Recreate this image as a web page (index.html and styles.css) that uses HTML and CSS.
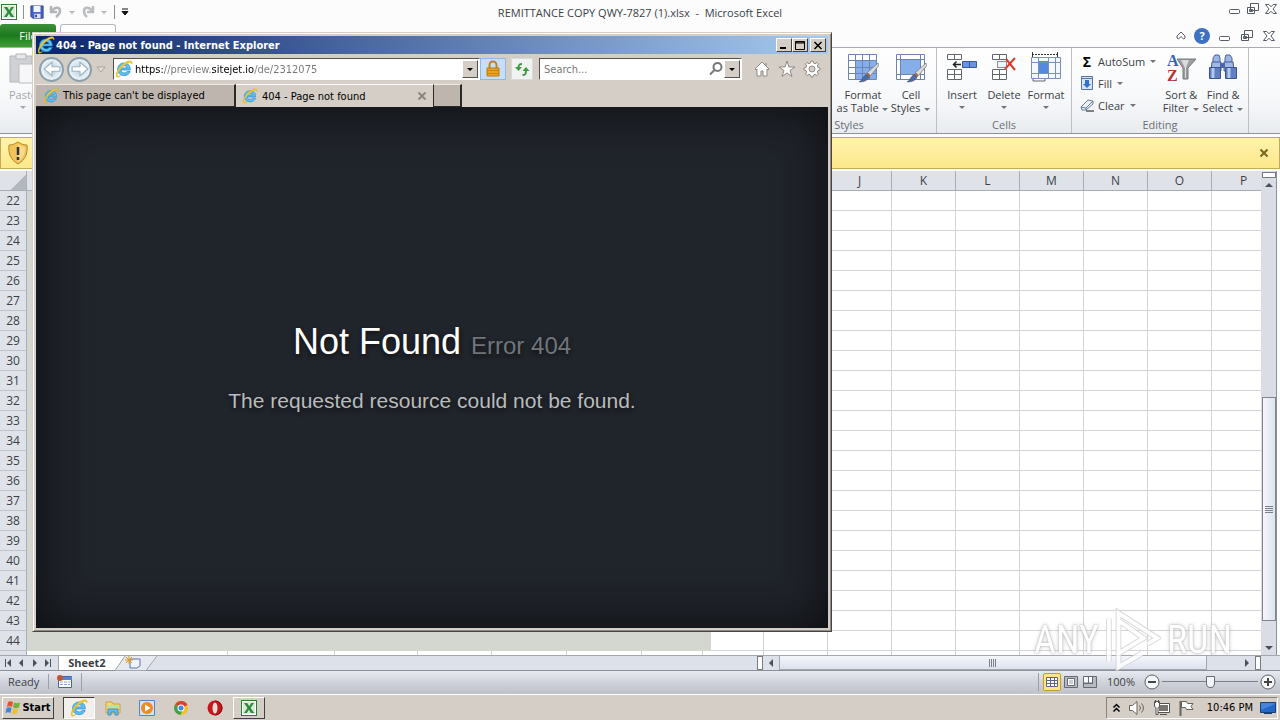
FILE: index.html
```html
<!DOCTYPE html>
<html lang="en">
<head>
    <meta charset="UTF-8">
    <meta name="viewport" content="width=device-width, initial-scale=1.0">
    <title>Desktop</title>
    <link rel="stylesheet" href="styles.css">
</head>
<body>
    <!-- shared icons -->
    <svg class="defs" width="0" height="0">
        <symbol id="ie" viewBox="0 0 16 16">
            <path d="M13.6 8.9H5.2c.1 1.500 1.300 2.600 3 2.600 1.200 0 2-.5 2.500-1.300h2.800c-.8 2.300-2.700 3.700-5.400 3.700C4.600 13.900 2.300 11.600 2.300 8.300 2.300 5 4.700 2.700 8 2.700c3.500 0 5.700 2.300 5.600 6.200zM5.300 7h5.300C10.400 5.700 9.400 5 8 5 6.600 5 5.600 5.700 5.300 7z" fill="#5cc0f2" stroke="#2b86cc" stroke-width=".6"/>
            <path d="M1.500 15C-.5 12.500 4 5.500 9 2.300 12.500 0 16 .2 15 3.600c0-1.900-2-2-5-.1C5.500 6.300 1.800 11.300 1.900 13.700c.1 1 1.500.9 3.100.1C3.700 15 2.300 15.700 1.500 15z" fill="#f3d02c" stroke="#d8ac18" stroke-width=".4"/>
        </symbol>
        <symbol id="excel" viewBox="0 0 16 16">
            <rect x=".5" y=".5" width="15" height="15" fill="#fff" stroke="#2b7a36"/>
            <rect x="2" y="2" width="12" height="12" fill="#d5e9d3"/>
            <path d="M3 3h3.200l2 3.200L10.300 3H13L9.600 8l3.600 5H10L7.900 9.800 5.800 13H3l3.500-5z" fill="#2e8b3d"/>
        </symbol>
        <symbol id="min" viewBox="0 0 14 12"><rect x="1.500" y="6.500" width="10" height="4" rx="1" fill="#fff" stroke="#555b63"/></symbol>
        <symbol id="restore" viewBox="0 0 14 12">
            <path d="M4.500.5h8v7h-8z M1.500 4.500h7v6h-7z" fill="#fff" stroke="#555b63"/><path d="M3.500 6.500h3v2h-3z" fill="none" stroke="#555b63"/>
        </symbol>
        <symbol id="close" viewBox="0 0 14 12"><path d="M1.500 1.500h3.300L7 3.800l2.200-2.300h3.300L9 6l3.500 4.500H9.200L7 8.200l-2.200 2.300H1.500L5 6z" fill="#fff" stroke="#555b63"/></symbol>
        <symbol id="brush" viewBox="0 0 20 20">
            <path d="M19 1l1 2-8 10-3-3z" fill="#d8dade" stroke="#70757c" stroke-width=".7"/>
            <path d="M9 10l3 3-2 2-3-2z" fill="#b06a38"/>
            <path d="M7.500 12l3 2.500C9 18 5 19 1 19c3-1 3-5 6.500-7z" fill="#4d6da8" stroke="#384a70" stroke-width=".5"/>
        </symbol>
        <symbol id="down" viewBox="0 0 8 5"><path d="M1 1h6L4 4z" fill="currentColor"/></symbol>
    </svg>

    <main class="excel">
        <header class="excel-title">
            <div class="quick">
                <svg width="16" height="16"><use href="#excel"/></svg>
                <span class="sep"></span>
                <svg width="14" height="14" viewBox="0 0 16 16"><path d="M1 1h14v14H3l-2-2z" fill="#4a62c4" stroke="#2d3d92"/><path d="M4 1h8v7H4z" fill="#f2f5fb"/><path d="M5 10h7v5H5z" fill="#dfe3ee"/><path d="M6 11h2v3H6z" fill="#2d3d92"/></svg>
                <svg class="undo" width="16" height="16" viewBox="0 0 16 16"><path d="M3 2v6h6M3.500 7.500C7 2 12 3 12 7c0 3-2 4.500-4 6" fill="none" stroke="#b2b5b9" stroke-width="2.500"/></svg>
                <svg class="faint" width="8" height="5"><use href="#down"/></svg>
                <svg class="redo" width="16" height="16" viewBox="0 0 16 16"><path d="M13 2v6H7M12.500 7.500C9 2 4 3 4 7c0 3 1 4.500 3 6" fill="none" stroke="#b9bcc0" stroke-width="2.500"/></svg>
                <svg class="faint" width="8" height="5"><use href="#down"/></svg>
                <span class="sep"></span>
                <svg width="8" height="8" viewBox="0 0 8 8"><path d="M1 1h6M1 3.500h6L4 7z" fill="#111" stroke="#111"/></svg>
            </div>
            <h1>REMITTANCE COPY QWY-7827 (1).xlsx&nbsp; -&nbsp; Microsoft Excel</h1>
            <div class="wincontrols">
                <button aria-label="Minimize"><svg width="14" height="12"><use href="#min"/></svg></button>
                <button aria-label="Restore"><svg width="14" height="12"><use href="#restore"/></svg></button>
                <button aria-label="Close"><svg width="14" height="12"><use href="#close"/></svg></button>
            </div>
        </header>

        <div class="tabs-row">
            <button class="file-tab">File</button>
            <button class="home-tab" aria-label="Home"></button>
            <div class="doc-controls">
                <button aria-label="Collapse ribbon"><svg width="10" height="9" viewBox="0 0 10 9"><path d="M1 7V5l4-4 4 4v2L7.500 8 5 5.500 2.500 8z" fill="#fff" stroke="#555b63"/></svg></button>
                <button class="help" aria-label="Help">?</button>
                <button aria-label="Minimize workbook"><svg width="14" height="12"><use href="#min"/></svg></button>
                <button aria-label="Restore workbook"><svg width="14" height="12"><use href="#restore"/></svg></button>
                <button aria-label="Close workbook"><svg width="14" height="12"><use href="#close"/></svg></button>
            </div>
        </div>

        <div class="ribbon">
            <div class="big-buttons clipboard">
                <button class="big disabled">
                    <svg width="32" height="32" viewBox="0 0 32 32"><path d="M3 4h22v26H3z" fill="#d0d1d4" stroke="#b4b5b8"/><path d="M9 2h10v5H9z" fill="#e8e8ea" stroke="#b4b5b8"/><path d="M12 12h18v19H12z" fill="#f7f7f9" stroke="#bbbcc0"/></svg>
                    <span>Paste</span><svg width="8" height="5"><use href="#down"/></svg>
                </button>
            </div>
            <div class="fill"></div>
            <section class="group styles">
                <div class="big-buttons">
                    <button class="big wide">
                        <svg width="32" height="32" viewBox="0 0 32 32"><path d="M1.500 2.500h28v25h-28z" fill="#fff"/><path d="M8 8h22v19H8z" fill="#86aeea"/><path d="M1.500 2.500h28v25h-28zM1 8.500h29M1 15.500h29M1 21.500h29M8.500 2v26M15.500 2v26M22.500 2v26" fill="none" stroke="#6c83b3"/><use href="#brush" x="11" y="10" width="21" height="21"/></svg>
                        <span>Format</span><span>as Table <svg width="8" height="5"><use href="#down"/></svg></span>
                    </button>
                    <button class="big mid">
                        <svg width="32" height="32" viewBox="0 0 32 32"><path d="M1.500 2.500h28v25h-28z" fill="#fff"/><path d="M6 8h19v14H6z" fill="#86aeea"/><path d="M1.500 2.500h28v25h-28zM1 7.500h29M1 22.500h29M5.500 2v26M25.500 2v26" fill="none" stroke="#6c83b3"/><use href="#brush" x="11" y="10" width="21" height="21"/></svg>
                        <span>Cell</span><span>Styles <svg width="8" height="5"><use href="#down"/></svg></span>
                    </button>
                </div>
                <h2>Styles</h2>
            </section>
            <section class="group cells">
                <div class="big-buttons">
                    <button class="big">
                        <svg width="32" height="32" viewBox="0 0 32 32"><path d="M1.500 2.500h14v5h-14zM8.500 2v5M1.500 17.500h14v10h-14zM8.500 17v10M1 22.500h15" fill="#fff" stroke="#62666d"/><path d="M16.500 9.500h14v6h-14z" fill="#6795e0" stroke="#345c9e"/><path d="M23.500 10v5" stroke="#345c9e"/><path d="M15 12.500H8M10.500 9.500l-3 3 3 3" fill="none" stroke="#222" stroke-width="1.500"/></svg>
                        <span>Insert</span><svg width="8" height="5"><use href="#down"/></svg>
                    </button>
                    <button class="big">
                        <svg width="32" height="32" viewBox="0 0 32 32"><path d="M4.500 2.500h14v5h-14zM11.500 2v5M4.500 17.500h14v10h-14zM11.500 17v10M4 22.500h15" fill="#fff" stroke="#62666d"/><path d="M9.500 9.500h9v6h-9z" fill="#eef4ff" stroke="#222" stroke-dasharray="1 1"/><path d="M18 7l9 11M27 6L17 17" stroke="#df3b2c" stroke-width="2"/></svg>
                        <span>Delete</span><svg width="8" height="5"><use href="#down"/></svg>
                    </button>
                    <button class="big">
                        <svg width="32" height="32" viewBox="0 0 32 32"><path d="M1.500 5.500h29v20h-29z" fill="#f5f8ff"/><path d="M9 9h9v13H9z" fill="#5589df"/><path d="M1.500 5.500h29v21h-29zM1 10.500h29M1 21.500h29M8.500 6v20M18.500 6v20M25.500 6v20" fill="none" stroke="#7b8fc0"/><path d="M2 2.500h26M2.500 0v5M27.500 0v5" stroke="#333" stroke-dasharray="2 1"/><path d="M3 27v2h12v-2" fill="none" stroke="#62666d"/></svg>
                        <span>Format</span><svg width="8" height="5"><use href="#down"/></svg>
                    </button>
                </div>
                <h2>Cells</h2>
            </section>
            <section class="group editing">
                <div class="editing-row">
                    <div class="small-buttons">
                        <button><b class="sigma">Σ</b>AutoSum <svg width="8" height="5"><use href="#down"/></svg></button>
                        <button><svg width="14" height="16" viewBox="0 0 14 16"><path d="M1.500 1.500h11v13h-11z" fill="#d7e5fa" stroke="#5773a8"/><path d="M1 3.500h12" stroke="#5773a8"/><path d="M5 5h4v4h2l-4 4-4-4h2z" fill="#2f6fd6"/></svg>Fill <svg width="8" height="5"><use href="#down"/></svg></button>
                        <button><svg width="14" height="14" viewBox="0 0 14 14"><path d="M1 9l7-7 5 1v3l-7 6H2z" fill="#e9f2fb" stroke="#6d7c95"/><path d="M1 9l5 1 7-7M6 10v2" fill="none" stroke="#6d7c95"/><path d="M6 13h8" stroke="#111"/></svg>Clear <svg width="8" height="5"><use href="#down"/></svg></button>
                    </div>
                    <div class="big-buttons">
                        <button class="big">
                            <svg width="32" height="32" viewBox="0 0 32 32"><path d="M12 7h19l-8 9v11h-5V16z" fill="#9b9da0" stroke="#77797d"/><path d="M16 8h8l-3 8v10h-1V16z" fill="#d9dadc"/><text x="2" y="14" class="az a">A</text><text x="2" y="29" class="az z">Z</text></svg>
                            <span>Sort &amp;</span><span>Filter <svg width="8" height="5"><use href="#down"/></svg></span>
                        </button>
                        <button class="big">
                            <svg width="32" height="32" viewBox="0 0 32 32"><path d="M8 3h4l1 3v6H6V6zM19 3h4l2 3v6h-7V6z" fill="#9db3e2" stroke="#4a64a0"/><path d="M5 10h9v9H4zM17 10h9l1 9h-10z" fill="#a3b8e6" stroke="#3f5a98"/><path d="M13 11h5v5h-5z" fill="#4d69aa"/><path d="M2.500 15.500h11v11h-11zM18.500 15.500h11v11h-11z" fill="#5f7fc2" stroke="#3a5592"/><path d="M6 16v10M22 16v10" stroke="#b5c7ee" stroke-width="3"/></svg>
                            <span>Find &amp;</span><span>Select <svg width="8" height="5"><use href="#down"/></svg></span>
                        </button>
                    </div>
                </div>
                <h2>Editing</h2>
            </section>
        </div>

        <div class="message-bar">
            <svg width="22" height="24" viewBox="0 0 22 24"><path d="M11 1c3 2 6 3 9 3 1 9-2 15-9 19C4 19 1 13 2 4c3 0 6-1 9-3z" fill="#f3c35a" stroke="#b38a2c"/><path d="M11 3c2 2 5 3 7 3 0 7-2 11-7 15z" fill="#f9d98a"/><path d="M11 6v8M11 16v3" stroke="#333" stroke-width="2.500"/></svg>
            <button aria-label="Close message bar"><svg width="10" height="10" viewBox="0 0 10 10"><path d="M1.500 1.500l7 7M8.500 1.500l-7 7" stroke="#7d6420" stroke-width="2"/></svg></button>
        </div>

        <div class="sheet">
            <div class="grid">
                <table>
                    <colgroup id="cols"></colgroup>
                    <thead><tr id="letters"></tr></thead>
                    <tbody id="rows"></tbody>
                </table>
                <div class="sheet-picture"></div>
            </div>
            <div class="vscroll">
                <span class="split"></span>
                <svg width="14" height="14" viewBox="0 0 14 14"><path d="M3 9h8L7 5z" fill="#4b4f56"/></svg>
                <div class="vtrack"><div class="vthumb"><i></i><i></i><i></i><i></i></div></div>
                <svg width="14" height="14" viewBox="0 0 14 14"><path d="M3 5h8L7 9z" fill="#4b4f56"/></svg>
            </div>
        </div>

        <div class="sheet-tabs">
            <div class="tab-side">
                <div class="tab-nav">
                    <svg width="8" height="8" viewBox="0 0 8 8"><path d="M1 0h1v8H1zM7 0v8L3 4z"/></svg>
                    <svg width="8" height="8" viewBox="0 0 8 8"><path d="M6 0v8L2 4z"/></svg>
                    <svg width="8" height="8" viewBox="0 0 8 8"><path d="M2 0v8l4-4z"/></svg>
                    <svg width="8" height="8" viewBox="0 0 8 8"><path d="M6 0h1v8H6zM1 0v8l4-4z"/></svg>
                </div>
                <button class="sheet-tab">Sheet2</button>
                <svg width="46" height="15" viewBox="0 0 46 15"><path d="M0 0h10L0 14z" fill="#fff"/><path d="M10 0L0 14.500h31L42 0" fill="#e6eaf0" stroke="#a3a8b0"/><path d="M15 3h10v7l-3 2h-7z" fill="#eef3fc" stroke="#5c76ab"/><path d="M14 0v8M10 4h8M11 1l6 6M17 1l-6 6" stroke="#d99a28"/></svg>
            </div>
            <div class="hscroll">
                <span class="vsplit"></span>
                <svg width="14" height="14" viewBox="0 0 14 14"><path d="M9 3v8L5 7z" fill="#4b4f56"/></svg>
                <div class="htrack"><div class="hthumb"><i></i><i></i><i></i><i></i></div></div>
                <svg width="14" height="14" viewBox="0 0 14 14"><path d="M5 3v8l4-4z" fill="#4b4f56"/></svg>
                <span class="vsplit"></span>
            </div>
        </div>

        <footer class="status">
            <span class="ready">Ready</span>
            <svg width="16" height="14" viewBox="0 0 16 14"><path d="M1.500 1.500h13v11h-13z" fill="#fff" stroke="#4463ae"/><path d="M1 2h14v3H1z" fill="#5b80cf"/><path d="M3 7h10M3 9.500h10" stroke="#8ba3dc" stroke-dasharray="3 1"/><circle cx="3" cy="3" r="3" fill="#c25536"/></svg>
            <span class="bar"></span>
            <div class="view">
                <span class="bar"></span>
                <button class="active" aria-label="Normal"><svg width="14" height="12" viewBox="0 0 14 12"><path d="M1.500 1.500h11v9h-11zM1 4.500h12M1 7.500h12M5.500 1v10M9.500 1v10" fill="#fff" stroke="#5b6585"/></svg></button>
                <button aria-label="Page layout"><svg width="14" height="12" viewBox="0 0 14 12"><path d="M.5.500h13v11H.5z" fill="#b7bac0" stroke="#666a72"/><path d="M3.500 2.500h7v7h-7z" fill="#fff" stroke="#666a72"/><path d="M5 5h4M5 7h4" stroke="#9a9ea5"/></svg></button>
                <button aria-label="Page break preview"><svg width="14" height="12" viewBox="0 0 14 12"><path d="M.5.500h13v11H.5z" fill="#b7bac0" stroke="#666a72"/><path d="M1 1h4v5H1zM6 1h3v5H6z" fill="#fff"/><path d="M5.500 1v6M9.500 1v6M1 7.500h9" stroke="#666a72"/></svg></button>
                <label for="zoom">100%</label>
                <button class="round" aria-label="Zoom out"><svg width="16" height="16" viewBox="0 0 16 16"><circle cx="8" cy="8" r="7" fill="#f5f6f8" stroke="#5d6168"/><path d="M4 8h8" stroke="#444" stroke-width="2"/></svg></button>
                <input id="zoom" type="range" min="0" max="100" value="50">
                <button class="round" aria-label="Zoom in"><svg width="16" height="16" viewBox="0 0 16 16"><circle cx="8" cy="8" r="7" fill="#f5f6f8" stroke="#5d6168"/><path d="M4 8h8M8 4v8" stroke="#444" stroke-width="2"/></svg></button>
            </div>
        </footer>
    </main>

    <section class="ie">
        <header class="ie-title">
            <svg width="18" height="18"><use href="#ie"/></svg>
            <h2>404 - Page not found - Internet Explorer</h2>
            <button aria-label="Minimize"><svg width="10" height="9" viewBox="0 0 10 9"><path d="M1 6h6v2H1z"/></svg></button>
            <button aria-label="Maximize"><svg width="10" height="9" viewBox="0 0 10 9"><path d="M.5.500h9v8h-9zM1 1h8v1H1z" fill="none" stroke="#000"/></svg></button>
            <button class="x" aria-label="Close"><svg width="10" height="9" viewBox="0 0 10 9"><path d="M1.500 1l7 7M8.500 1l-7 7" stroke="#000" stroke-width="1.500"/></svg></button>
        </header>
        <div class="ie-nav">
            <button class="travel" aria-label="Back"><svg width="18" height="18" viewBox="0 0 16 16"><path d="M1 8l7-6v4h7v4H8v4z" fill="#fff" stroke="#9db4c2"/></svg></button>
            <button class="travel" aria-label="Forward"><svg width="18" height="18" viewBox="0 0 16 16"><path d="M15 8L8 2v4H1v4h7v4z" fill="#fff" stroke="#9db4c2"/></svg></button>
            <svg class="recent" width="10" height="7" viewBox="0 0 10 7"><path d="M1 1h8L5 6z" fill="#e4e0da" stroke="#aaa39b"/></svg>
            <div class="field address">
                <svg width="18" height="18"><use href="#ie"/></svg>
                <input type="text" aria-label="Address" value="https://preview.sitejet.io/de/2312075">
                <button class="drop" aria-label="Show address list"><svg width="8" height="5"><use href="#down"/></svg></button>
            </div>
            <button class="lock" aria-label="Security report"><svg width="14" height="18" viewBox="0 0 14 18"><path d="M3.500 8V5a3.500 3.500 0 017 0v3" fill="none" stroke="#b8862a" stroke-width="2"/><path d="M1 8h12v8H1z" fill="#eda31d" stroke="#b57817"/><path d="M1 10.500h12M1 13.500h12" stroke="#c98417"/></svg></button>
            <button class="refresh" aria-label="Refresh"><svg width="16" height="16" viewBox="0 0 16 16"><path d="M8 3C5 3 4.500 4 4.500 7" fill="none" stroke="#3d9b3d" stroke-width="2"/><path d="M1 6h7l-3.500 4z" fill="#3d9b3d"/><path d="M8.500 14c3 0 3.500-1 3.500-4" fill="none" stroke="#3d9b3d" stroke-width="2"/><path d="M8.500 10h7L12 6z" fill="#3d9b3d"/></svg></button>
            <div class="field search">
                <input type="text" aria-label="Search" placeholder="Search...">
                <svg width="16" height="16" viewBox="0 0 16 16"><circle cx="9.500" cy="6" r="4" fill="none" stroke="#777" stroke-width="2"/><path d="M6.500 9L2 13.500" stroke="#777" stroke-width="2"/></svg>
                <button class="drop" aria-label="Search providers"><svg width="8" height="5"><use href="#down"/></svg></button>
            </div>
            <div class="ie-tools">
                <button aria-label="Home"><svg width="18" height="18" viewBox="0 0 18 18"><path d="M9 2l7 7-1 1-1-1v7h-4v-5H8v5H4V9l-1 1-1-1zM13 3v3" fill="#fff" stroke="#8f8983"/></svg></button>
                <button aria-label="Favorites"><svg width="18" height="18" viewBox="0 0 18 18"><path d="M9 1l2 6h6l-5 3.500 2 6-5-3.500-5 3.500 2-6L1 7h6z" fill="#fff" stroke="#8f8983"/></svg></button>
                <button aria-label="Tools"><svg width="18" height="18" viewBox="0 0 18 18"><path d="M8 1h2l.5 2 1.500.7L14 2.500 15.500 4l-1.200 2 .7 1.500 2 .5v2l-2 .5-.7 1.500 1.200 2-1.500 1.500-2-1.200-1.500.7-.5 2H8l-.5-2L6 14.300l-2 1.200L2.500 14l1.200-2L3 10.500 1 10V8l2-.5L3.700 6 2.500 4 4 2.500l2 1.200L7.500 3z" fill="#fff" stroke="#8f8983"/><circle cx="9" cy="9" r="3" fill="#d5cec6" stroke="#8f8983"/></svg></button>
            </div>
        </div>
        <nav class="ie-tabs">
            <button class="tab back"><svg width="16" height="16"><use href="#ie"/></svg>This page can't be displayed</button>
            <button class="tab front"><svg width="16" height="16"><use href="#ie"/></svg><span>404 - Page not found</span><svg width="10" height="10" viewBox="0 0 10 10"><path d="M1.500 1.500l7 7M8.500 1.500l-7 7" stroke="#8b8681" stroke-width="2"/></svg></button>
            <button class="new-tab" aria-label="New tab"></button>
        </nav>
        <article class="page">
            <h1>Not Found <small>Error 404</small></h1>
            <p>The requested resource could not be found.</p>
        </article>
    </section>

    <div class="watermark">
        <span>ANY</span>
        <svg width="56" height="64" viewBox="0 0 58 64"><path d="M4 10v44M14 28V4l40 26-10 6M14 36v24l24-14M14 12l26 18-26 16z" fill="none" stroke="#d0d0d0" stroke-width="6"/><path d="M4 10v44M14 28V4l40 26-10 6M14 36v24l24-14M14 12l26 18-26 16z" fill="none" stroke="#fff" stroke-width="4"/></svg>
        <span>RUN</span>
    </div>

    <footer class="taskbar">
        <button class="start"><svg width="16" height="16" viewBox="0 0 16 16"><path d="M3 2c2-1 3-1 5 0L7 7C5 6 4 6 2 7z" fill="#e5532d"/><path d="M9 2.500c2 1 3 1 6 0l-1 5c-3 1-4 1-6 0z" fill="#74b33a"/><path d="M1.500 8c2-1 3-1 5 0l-1 5c-2-1-3-1-5 0z" fill="#3f86d8"/><path d="M8 8.500c2 1 3 1 5 0l-1 5c-2 1-3 1-5 0z" fill="#f3bd2c"/></svg>Start</button>
        <button class="task active" aria-label="Internet Explorer"><svg width="18" height="18"><use href="#ie"/></svg></button>
        <button class="task" aria-label="Explorer"><svg width="18" height="16" viewBox="0 0 18 16"><path d="M2 2h6l1 2h7v9H2z" fill="#f5d76e" stroke="#c9a53c"/><path d="M3 5h12v3H3z" fill="#b9e2a0"/><path d="M4 15V9h10v6h-3v-3H7v3z" fill="#6dbbe6" stroke="#3c8fc0"/></svg></button>
        <button class="task" aria-label="Media Player"><svg width="16" height="16" viewBox="0 0 16 16"><path d="M.5.500h15v15H.5z" fill="#cfe3f6" stroke="#4e8ac7"/><circle cx="8" cy="8" r="6" fill="#f18a1d"/><path d="M6 4.500L11.500 8 6 11.500z" fill="#fff"/></svg></button>
        <button class="task" aria-label="Chrome"><svg width="16" height="16" viewBox="0 0 16 16"><circle cx="8" cy="8" r="7" fill="#f4c21f"/><path d="M8 8L2 4.500A7 7 0 0114.500 5z" fill="#dd4132"/><path d="M8 8L2 4.500A7 7 0 007.500 15L10 9z" fill="#3ea251"/><circle cx="8" cy="8" r="3.500" fill="#fff"/><circle cx="8" cy="8" r="2.500" fill="#4285f4"/></svg></button>
        <button class="task" aria-label="Opera"><svg width="16" height="16" viewBox="0 0 16 16"><ellipse cx="8" cy="8" rx="7.500" ry="7.500" fill="#c4161c"/><ellipse cx="8" cy="8" rx="2.500" ry="5.500" fill="#e6ddd6"/><path d="M8 1a7 7 0 010 14" fill="none" stroke="#86090d"/></svg></button>
        <button class="task raised" aria-label="Excel"><svg width="16" height="16"><use href="#excel"/></svg></button>
        <div class="tray">
            <svg width="9" height="10" viewBox="0 0 9 10"><path d="M1.500 4.500l3-3 3 3M1.500 8.500l3-3 3 3" fill="none" stroke="#000" stroke-width="1.500"/></svg>
            <svg width="18" height="16" viewBox="0 0 18 16"><path d="M1.500 5.500h3L9 1.500v13l-4.500-4h-3z" fill="#fff" stroke="#66625d"/><path d="M11.500 5.500q2 2.500 0 5M13.500 3.500q4 4.500 0 9" fill="none" stroke="#66625d"/></svg>
            <svg width="18" height="16" viewBox="0 0 18 16"><path d="M4.500 3.500h12v9h-12zM7 14.500h7" fill="#fff" stroke="#55514d"/><path d="M6 5h9v6H6z" fill="#77736e"/><path d="M1.500 1.500h5v5l-1.500 1v7H3v-7l-1.500-1zM2.500 0v3M5.500 0v3" fill="#fff" stroke="#55514d"/></svg>
            <svg width="16" height="16" viewBox="0 0 16 16"><path d="M2.500 1v15" stroke="#66625d" stroke-width="2"/><path d="M3.500 1.500h5l1 2h5.500l-2 3 2 3H8.500l-1-2h-4z" fill="#fff" stroke="#66625d"/></svg>
            <time>10:46 PM</time>
            <svg width="16" height="14" viewBox="0 0 16 14"><path d="M.5 1.500h15v10H.5z" fill="#2368c6" stroke="#173f78"/><path d="M1 9L15 3v-1H1z" fill="#4584d8"/><path d="M4 12.500h8" stroke="#173f78"/></svg>
        </div>
    </footer>

    <script>
        // column widths A..I, the rest use the default 64
        const widths = [201, 107, 83, 74, 75, 75, 61, 61, 64];
        const letters = 'ABCDEFGHIJKLMNOPQRSTUVWXYZ';
        const grid = document.querySelector('.grid');
        const gridWidth = grid.clientWidth;
        const gridHeight = grid.clientHeight;
        let cols = '<col style="width:27px">';
        let head = '<th class="corner"></th>';
        let total = 27;
        let count = 0;

        // add columns until the visible area is filled
        while (count < letters.length && total < gridWidth) {
            const w = widths[count] || 64;
            total += w;
            cols += `<col style="width:${w}px">`;
            head += `<th>${letters[count]}</th>`;
            count++;
        }
        document.getElementById('cols').innerHTML = cols;
        document.getElementById('letters').innerHTML = head;
        document.querySelector('.grid table').style.width = total + 'px';

        // a row that does not fit whole gets no number
        let rows = '';
        for (let r = 22, y = 20; y < gridHeight; r++, y += 20) {
            const number = y + 20 <= gridHeight ? r : '';
            rows += `<tr><th>${number}</th>${'<td></td>'.repeat(count)}</tr>`;
        }
        document.getElementById('rows').innerHTML = rows;
    </script>
</body>
</html>
```
FILE: styles.css
```css
* {
    box-sizing: border-box;
}
body {
    display: flex;
    flex-direction: column;
    position: relative;
    height: 100vh;
    margin: 0;
    overflow: hidden;
    font-family: "Open Sans", "Noto Sans", sans-serif;
    font-size: 11px;
    color: #3b3f45;
}
h1, h2, p {
    margin: 0;
    font-weight: normal;
}
button {
    display: flex;
    align-items: center;
    justify-content: center;
    padding: 0;
    border: 0;
    background: none;
    font: inherit;
    color: inherit;
}
svg {
    flex: none;
}
.defs {
    position: absolute;
}

/* Excel */
.excel {
    flex: 1;
    min-height: 0;
    display: flex;
    flex-direction: column;
    background: #fcfcfd;
}
.excel-title {
    display: grid;
    grid-template-columns: 1fr auto 1fr;
    align-items: center;
    height: 24px;
}
.excel-title h1 {
    font-size: 11px;
}
.quick {
    display: flex;
    align-items: center;
    gap: 4px;
    padding-left: 1px;
}
.quick .sep {
    width: 1px;
    height: 14px;
    margin: 0 2px;
    background: #8d9197;
}
.faint {
    color: #b2b5b9;
}
.wincontrols {
    display: flex;
    justify-content: flex-end;
    gap: 4px;
    padding: 0 2px 6px 0;
}
.tabs-row {
    display: flex;
    height: 24px;
    border-bottom: 1px solid #a9adb3;
}
.file-tab {
    width: 56px;
    border-radius: 3px 3px 0 0;
    background: linear-gradient(#3b8f38, #1d7a1d 50%, #3f9f35);
    color: #fff;
}
.home-tab {
    width: 56px;
    margin-left: 4px;
    border: 1px solid #b5b8bd;
    border-bottom: 0;
    border-radius: 3px 3px 0 0;
    background: #fff;
}
.doc-controls {
    display: flex;
    align-items: center;
    gap: 8px;
    margin-left: auto;
    padding-right: 4px;
}
.help {
    width: 16px;
    height: 16px;
    border-radius: 50%;
    background: #3c72c0;
    color: #fff;
    font-weight: bold;
}
.ribbon {
    display: flex;
    height: 86px;
    padding-right: 31px;
    border-bottom: 1px solid #8d9299;
    background: linear-gradient(#fff, #f7f8fa 60%, #e8ebef);
}
.ribbon svg {
    color: #70757c;
}
.fill {
    flex: 1;
}
.group {
    display: flex;
    flex-direction: column;
    justify-content: space-between;
    border-right: 1px solid #bcc0c6;
}
.group h2 {
    padding-bottom: 1px;
    font-size: 11px;
    line-height: 14px;
    text-align: center;
    color: #6b7078;
}
.styles {
    width: 175px;
}
.styles .big-buttons {
    justify-content: flex-end;
}
.cells {
    width: 135px;
}
.editing {
    width: 177px;
}
.big-buttons {
    display: flex;
    justify-content: center;
    padding: 4px 3px 0;
}
.clipboard {
    padding-left: 2px;
}
.big {
    flex-direction: column;
    justify-content: flex-start;
    width: 42px;
    line-height: 13px;
    white-space: nowrap;
}
.big > svg + span {
    padding-top: 4px;
}
.big > svg:last-child {
    margin-top: 4px;
}
.wide {
    width: 52px;
}
.mid {
    width: 44px;
}
.ribbon .disabled, .ribbon .disabled svg {
    color: #a4a6aa;
}
.az {
    font: bold 16px "Liberation Serif", serif;
}
.a {
    fill: #2f62b8;
}
.z {
    fill: #b03434;
}
.editing-row {
    display: flex;
    justify-content: space-between;
}
.editing-row .big-buttons {
    padding-right: 4px;
}
.small-buttons {
    display: flex;
    flex-direction: column;
    padding: 2px 0 0 8px;
}
.small-buttons button {
    justify-content: flex-start;
    gap: 4px;
    height: 22px;
}
.sigma {
    width: 14px;
    font-size: 14px;
    color: #000;
    text-align: center;
}
.message-bar {
    display: flex;
    align-items: center;
    justify-content: space-between;
    height: 32px;
    margin: 3px 0 2px;
    padding: 0 10px 0 6px;
    border: 1px solid #c0aa62;
    background: linear-gradient(#fff3ae, #fde98a);
}
.sheet {
    flex: 1;
    min-height: 0;
    display: flex;
    padding-right: 3px;
}
.grid {
    position: relative;
    flex: 1;
    overflow: hidden;
    background: #fff;
}
.grid table {
    table-layout: fixed;
    border-spacing: 0;
}
.grid th, .grid td {
    height: 20px;
    padding: 0;
    border-right: 1px solid #d2d3d6;
    border-bottom: 1px solid #d2d3d6;
}
.grid th {
    padding-top: 1px;
    border-color: #a9adb4;
    background: #dfe3e9;
    font-weight: normal;
    font-size: 12px;
    line-height: 18px;
}
.grid tbody th {
    border-bottom-color: #bfc3ca;
}
.grid .corner {
    background: linear-gradient(135deg, #dfe3e9 65%, #b3b7be 65%);
}
.sheet-picture {
    position: absolute;
    top: 20px;
    left: 27px;
    width: 684px;
    height: 460px;
    background: #d4d6d0;
}
.vscroll {
    display: flex;
    flex-direction: column;
    align-items: center;
    width: 16px;
    border-right: 1px solid #8d9197;
    background: #dadde6;
}
.split {
    width: 14px;
    height: 6px;
    margin-top: 1px;
    border: 1px solid #777b82;
    background: #fff;
}
.vtrack {
    display: flex;
    flex: 1;
    width: 14px;
    padding: 205px 0 20px;
}
.vthumb {
    display: flex;
    flex: 1;
    flex-direction: column;
    align-items: center;
    justify-content: center;
    gap: 1px;
    border: 1px solid #80848c;
    background: linear-gradient(90deg, #f5f7fb, #dde2ee);
}
.vthumb i {
    width: 8px;
    height: 1px;
    background: #7b7f87;
}
.sheet-tabs {
    display: flex;
    height: 16px;
    padding-right: 19px;
    border-top: 1px solid #a3a7ae;
    border-bottom: 1px solid #8d9199;
    background: #dde1e9;
}
.tab-side {
    display: flex;
    flex: 3;
    height: 14px;
}
.tab-nav {
    display: flex;
    align-items: center;
    justify-content: space-between;
    width: 59px;
    padding: 0 6px 0 4px;
    border-right: 1px solid #a3a7ae;
    fill: #4b4f56;
}
.sheet-tab {
    width: 56px;
    background: #fff;
    font-weight: bold;
    line-height: 14px;
}
.hscroll {
    display: flex;
    flex: 2;
}
.vsplit {
    width: 6px;
    border: 1px solid #777b82;
    background: #fff;
}
.hscroll svg {
    margin: 0 1px;
}
.htrack {
    flex: 1;
}
.hthumb {
    display: flex;
    align-items: center;
    justify-content: center;
    gap: 1px;
    width: 93%;
    height: 14px;
    border: 1px solid #a3a7ae;
    border-top: 0;
    background: linear-gradient(#f4f6fb, #dde2ee);
}
.hthumb i {
    width: 1px;
    height: 8px;
    background: #7b7f87;
}
.status {
    display: flex;
    align-items: center;
    gap: 8px;
    height: 23px;
    padding: 0 3px 2px 8px;
    background: linear-gradient(#e8eaf1, #cfd2da 50%, #bfc2c9);
}
.ready {
    width: 41px;
    border-right: 1px solid #9a9ea6;
}
.bar {
    width: 1px;
    height: 18px;
    background: #9a9ea6;
}
.view {
    display: flex;
    align-items: center;
    gap: 1px;
    margin-left: auto;
}
.view button {
    width: 18px;
    height: 18px;
}
.view .bar {
    margin-right: 3px;
}
.view .active {
    border: 1px solid #c79a2c;
    border-radius: 2px;
    background: #fde58a;
}
.view label {
    width: 42px;
    text-align: center;
}
.view input {
    width: 96px;
    height: 16px;
    margin: 0;
    appearance: none;
    background: linear-gradient(#7d8189, #7d8189) center / 100% 1px no-repeat;
}
.view input::-webkit-slider-thumb {
    appearance: none;
    width: 9px;
    height: 12px;
    border: 1px solid #666a72;
    border-radius: 1px 1px 5px 5px;
    background: #f5f6f9;
}

/* Internet Explorer window */
.ie {
    position: absolute;
    top: 32px;
    left: 32px;
    display: flex;
    flex-direction: column;
    width: calc(100% - 480px);
    height: calc(100% - 120px);
    padding: 3px;
    border: 1px solid;
    border-color: #d5cec6 #444 #444 #d5cec6;
    background: #d5cec6;
    box-shadow: inset 1px 1px #fff, inset -1px -1px #918b85;
    font-family: "DejaVu Sans Condensed", "DejaVu Sans", sans-serif;
    font-size: 11px;
    color: #000;
}
.ie-title {
    display: flex;
    align-items: center;
    height: 18px;
    padding: 0 2px 0 1px;
    background: linear-gradient(90deg, #0a246a, #a6caf0);
    color: #fff;
}
.ie-title h2 {
    flex: 1;
    padding-left: 1px;
    font-size: 11px;
    font-weight: bold;
}
.ie-title button {
    width: 16px;
    height: 14px;
    border: 1px solid;
    border-color: #fff #404040 #404040 #fff;
    background: #d5cec6;
}
.ie-title .x {
    margin-left: 2px;
}
.ie-nav {
    display: flex;
    align-items: center;
    height: 30px;
    padding: 0 7px 0 3px;
}
.travel {
    width: 25px;
    height: 25px;
    margin-right: 3px;
    border: 2px solid #8ba0ae;
    border-radius: 50%;
    background: radial-gradient(#b5cddb, #f2f7fa 75%);
}
.recent {
    margin: 0 7px 0 1px;
}
.field {
    display: flex;
    align-items: center;
    height: 22px;
    padding: 1px;
    border: 1px solid;
    border-color: #55504b #fff #fff #55504b;
    background: #fff;
}
.field input {
    flex: 1;
    min-width: 0;
    padding: 0 3px;
    border: 0;
    background: none;
    font: inherit;
    color: #666;
}
.field input::placeholder {
    color: #777;
}
.address {
    flex: 2;
}
/* scheme and host are darker than the rest of the address */
.address input {
    padding-left: 2px;
    background: linear-gradient(90deg, #000 30px, #777 30px, #777 78px, #000 78px, #000 121px, #777 121px);
    background-clip: text;
    -webkit-text-fill-color: transparent;
}
.drop {
    width: 16px;
    height: 18px;
    border: 1px solid;
    border-color: #fff #55504b #55504b #fff;
    background: #d5cec6;
}
.lock {
    width: 26px;
    height: 22px;
    border: 1px solid #8fb8e6;
    background: #c8def7;
}
.refresh {
    width: 22px;
    height: 22px;
    margin: 0 6px 0 5px;
    border: 1px solid #d6dbe0;
    background: #f1f3f3;
}
.search {
    flex: 0 1 203px;
}
.ie-tools {
    display: flex;
    gap: 7px;
    margin-left: 11px;
}
.ie-tabs {
    display: flex;
    height: 23px;
}
.tab {
    justify-content: flex-start;
    gap: 4px;
    width: 200px;
    padding: 0 7px;
    white-space: nowrap;
}
.tab span {
    flex: 1;
    text-align: left;
}
.back, .new-tab {
    border-top: 1px solid #eee9e4;
    border-right: 2px solid #2b2927;
    border-bottom: 1px solid #2b2927;
    background: #bdb5ae;
}
.front {
    width: 197px;
    padding: 0 6px;
    border-top: 1px solid #fff;
}
.new-tab {
    width: 29px;
    border-left: 1px solid #2b2927;
}
.page {
    flex: 1;
    display: flex;
    flex-direction: column;
    align-items: center;
    justify-content: center;
    gap: 22px;
    background: #20242b;
    box-shadow: inset 0 0 50px #0c0d10;
    font-family: "Liberation Sans", Arial, sans-serif;
    text-shadow: 0 2px 4px #111;
}
.page h1 {
    font-size: 36px;
    line-height: 40px;
    color: #fff;
}
.page small {
    font-size: 24px;
    color: #70757b;
}
.page p {
    font-size: 21px;
    line-height: 26px;
    color: #b9bbbd;
}

/* recorder logo over the lower right corner */
.watermark {
    position: absolute;
    right: 48px;
    bottom: 48px;
    display: flex;
    align-items: center;
    gap: 6px;
    font-family: "Roboto Condensed", "Liberation Sans Narrow", "Liberation Sans", sans-serif;
    font-size: 38px;
    color: #fff;
    text-shadow: 0 0 2px #999, 0 0 4px #bbb;
    opacity: 0.8;
    pointer-events: none;
}

/* taskbar */
.taskbar {
    display: flex;
    align-items: center;
    height: 26px;
    padding: 0 2px;
    border-top: 1px solid #fff;
    background: #d5cec6;
    font-family: "DejaVu Sans Condensed", "DejaVu Sans", sans-serif;
    color: #000;
}
.start {
    gap: 1px;
    width: 52px;
    height: 22px;
    margin-right: 9px;
    border: 1px solid;
    border-color: #fff #404040 #404040 #fff;
    font-weight: bold;
}
.task {
    width: 32px;
    height: 22px;
    margin-right: 2px;
}
.task.active {
    border: 1px solid;
    border-color: #404040 #fff #fff #404040;
    background: #f2efec;
}
.task.raised {
    border: 1px solid;
    border-color: #fff #404040 #404040 #fff;
}
.tray {
    display: flex;
    align-items: center;
    gap: 7px;
    height: 22px;
    margin-left: auto;
    padding: 0 1px 0 5px;
    border: 1px solid;
    border-color: #8a847e #fff #fff #8a847e;
}
.tray time {
    padding-left: 6px;
}
```
